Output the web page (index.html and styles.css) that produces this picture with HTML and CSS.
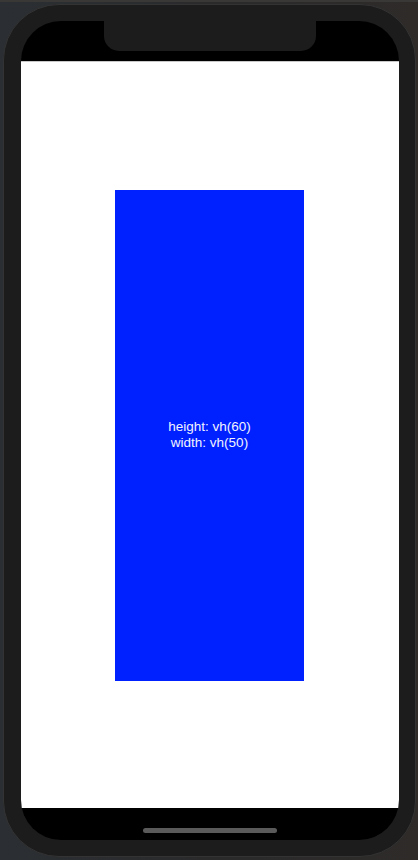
FILE: index.html
```html
<!DOCTYPE html>
<html>
<head>
<meta charset="utf-8">
<link rel="stylesheet" href="styles.css">
</head>
<body>
<div class="desk">
  <div class="phone">
    <div class="screen">
      <div class="top"><div class="notch"></div></div>
      <div class="content">
        <div class="box">
          <div>height: vh(60)</div>
          <div>width: vh(50)</div>
        </div>
      </div>
      <div class="bottom"><div class="home"></div></div>
    </div>
  </div>
</div>
</body>
</html>
```
FILE: styles.css
```css
html, body {
  margin: 0;
  padding: 0;
  width: 418px;
  height: 860px;
  overflow: hidden;
}
body {
  background: linear-gradient(90deg, #2b2f33 0%, #2a2a2b 50%, #2e2b29 100%);
  font-family: "Liberation Sans", Arial, sans-serif;
}
.desk {
  border-top: 2px solid #3a3836;
  padding: 2px 2px 0 3px;
}
.phone {
  box-sizing: border-box;
  width: 413px;
  height: 853px;
  background: #1c1c1c;
  border: 1px solid #333333;
  border-radius: 56px;
  padding: 16px 16px 15px 17px;
}
.screen {
  height: 819px;
  background: #000;
  border-radius: 40px;
  display: flex;
  flex-direction: column;
  overflow: hidden;
}
.top {
  height: 40px;
  display: flex;
  justify-content: center;
}
.notch {
  width: 212px;
  height: 30px;
  background: #1c1c1c;
  border-radius: 0 0 15px 15px;
}
.content {
  height: 747px;
  background: #fff;
  border-top: 1px solid #c8c8c8;
  box-sizing: border-box;
  display: flex;
  align-items: center;
  justify-content: center;
}
.box {
  width: 189px;
  height: 491px;
  margin-left: -1px;
  background: #0021ff;
  color: #f2f3ff;
  font-size: 13.5px;
  line-height: 16px;
  display: flex;
  flex-direction: column;
  align-items: center;
  justify-content: center;
}
.bottom {
  height: 32px;
  display: flex;
  justify-content: center;
  align-items: flex-start;
}
.home {
  margin-top: 20px;
  width: 134px;
  height: 5px;
  border-radius: 3px;
  background: #5a5a5a;
}
```
